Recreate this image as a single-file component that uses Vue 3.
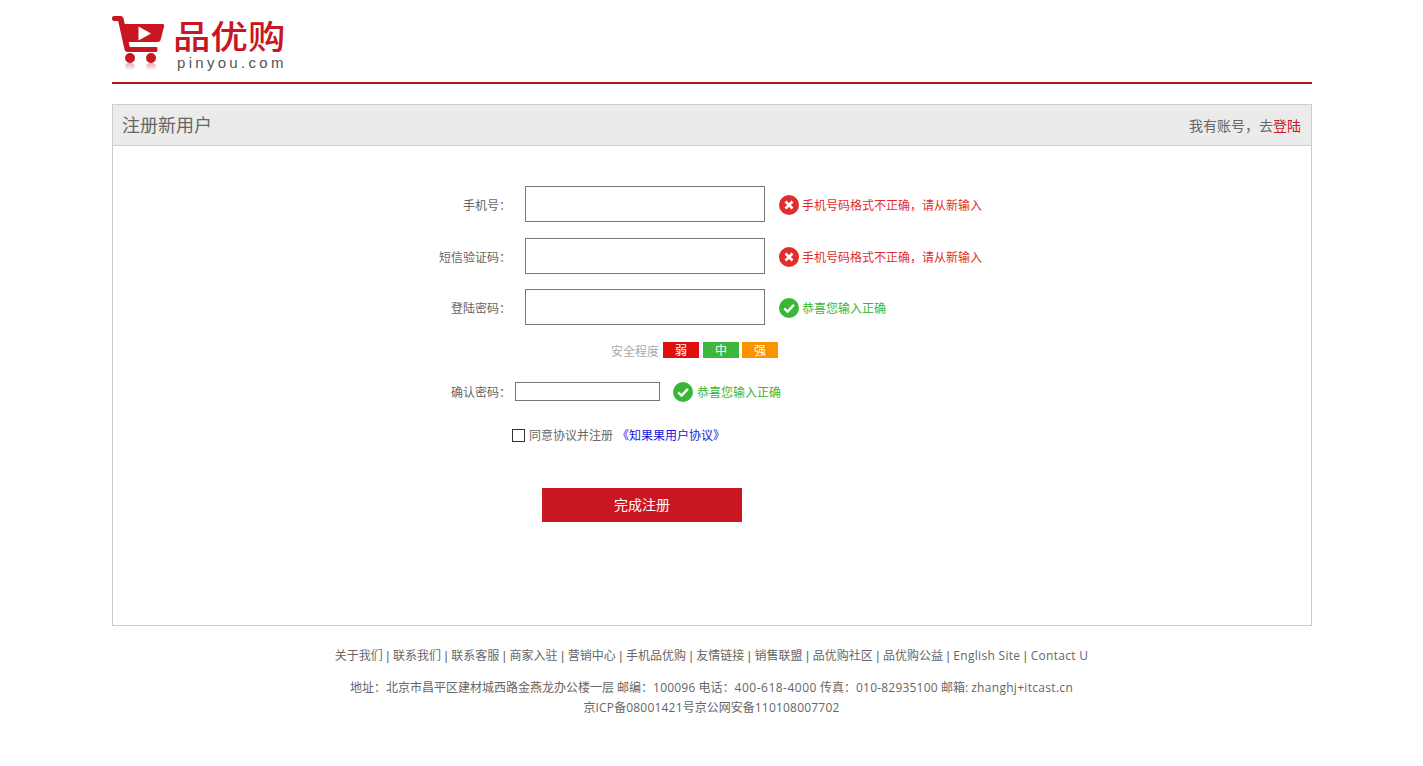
<script setup>
const footerLinks = ['关于我们','联系我们','联系客服','商家入驻','营销中心','手机品优购','友情链接','销售联盟','品优购社区','品优购公益']
const footerLatin = ['English Site','Contact U']
const wideRows = [
  { label: '手机号：', ok: false, msg: '手机号码格式不正确，请从新输入', cls: 'gap-a' },
  { label: '短信验证码：', ok: false, msg: '手机号码格式不正确，请从新输入', cls: 'gap-b' },
  { label: '登陆密码：', ok: true, msg: '恭喜您输入正确', cls: 'gap-c' }
]
</script>

<template>
  <div class="page">
    <header class="top">
      <svg class="cart" viewBox="112 14 54 58" width="54" height="58" aria-hidden="true">
        <defs>
          <linearGradient id="fade" x1="0" y1="0" x2="0" y2="1">
            <stop offset="0" stop-color="#c81623" stop-opacity=".4" />
            <stop offset="1" stop-color="#c81623" stop-opacity="0" />
          </linearGradient>
        </defs>
        <path d="M114 16h6.5c1.6 0 2.6.9 3 2.400l6.300 28.600h26.200c1 0 1.500.6 1.500 2.500s-.5 2.500-1.500 2.500h-28.500c-1.600 0-2.700-.9-3-2.400l-6.300-28.600h-4.200c-1.300 0-2-1-2-2.500s.7-2.500 2-2.500z" fill="#c81623" />
        <path d="M123.500 24h39c1.300 0 2 .9 1.700 2.100l-3.500 13.400c-.4 1.500-1.200 2.500-2.700 2.500h-29.800l-2.700 1z" fill="#c81623" />
        <path d="M138.500 26.500l12.500 7-12.500 7z" fill="#fff" />
        <circle cx="130" cy="58" r="5" fill="#c81623" />
        <circle cx="151" cy="58" r="5" fill="#c81623" />
        <ellipse cx="130" cy="66.500" rx="5" ry="4" fill="url(#fade)" />
        <ellipse cx="151" cy="66.500" rx="5" ry="4" fill="url(#fade)" />
      </svg>
      <div class="brand">
        <div class="brand-cn">品优购</div>
        <div class="brand-en">pinyou.com</div>
      </div>
    </header>

    <section class="panel">
      <div class="panel-head">
        <h3 class="panel-title">注册新用户</h3>
        <span class="panel-login">我有账号，去<a class="login-link">登陆</a></span>
      </div>

      <div class="panel-body">
        <div v-for="row in wideRows" :key="row.label" class="row" :class="row.cls">
          <label class="label">{{ row.label }}</label>
          <div class="input wide"></div>
          <div class="msg" :class="row.ok ? 'ok' : 'err'">
            <svg class="msg-icon" viewBox="0 0 20 20" width="20" height="20" aria-hidden="true">
              <circle cx="10" cy="10" r="10" :fill="row.ok ? '#39b636' : '#e22d2d'" />
              <path v-if="row.ok" d="M5.200 10.300l3.400 3.300 6.300-6.700" fill="none" stroke="#fff" stroke-width="2.400" />
              <path v-else d="M6.500 6.500l7 7M13.500 6.500l-7 7" fill="none" stroke="#fff" stroke-width="2.600" />
            </svg>
            <span>{{ row.msg }}</span>
          </div>
        </div>

        <div class="strength">
          <span class="strength-label">安全程度</span>
          <span class="level red">弱</span>
          <span class="level green">中</span>
          <span class="level orange">强</span>
        </div>

        <div class="row confirm">
          <label class="label">确认密码：</label>
          <div class="input narrow"></div>
          <div class="msg ok tight">
            <svg class="msg-icon" viewBox="0 0 20 20" width="20" height="20" aria-hidden="true">
              <circle cx="10" cy="10" r="10" fill="#39b636" />
              <path d="M5.200 10.300l3.400 3.300 6.300-6.700" fill="none" stroke="#fff" stroke-width="2.400" />
            </svg>
            <span>恭喜您输入正确</span>
          </div>
        </div>

        <div class="agree">
          <span class="check"></span>
          <span class="agree-text">同意协议并注册</span>
          <a class="agree-link">《知果果用户协议》</a>
        </div>

        <button class="submit" type="button">完成注册</button>
      </div>
    </section>

    <footer class="foot">
      <p class="foot-links">
        <template v-for="item in footerLinks" :key="item"><span>{{ item }}</span><span class="sep"> | </span></template><span class="lat">{{ footerLatin[0] }}</span><span class="sep"> | </span><span class="lat">{{ footerLatin[1] }}</span>
      </p>
      <p class="foot-line first">地址：北京市昌平区建材城西路金燕龙办公楼一层 邮编：<span class="lat-s">100096</span> 电话：<span class="lat-m">400-618-4000</span> 传真：<span class="lat-s">010-82935100</span> 邮箱: <span class="lat">zhanghj+itcast.cn</span></p>
      <p class="foot-line last">京<span class="lat-s">ICP</span>备<span class="lat-s">08001421</span>号京公网安备<span class="lat-s">110108007702</span></p>
    </footer>
  </div>
</template>

<style>
html, body { margin: 0; background: #fff; }
</style>

<style scoped>
.page {
  width: 1200px;
  margin-left: 112px;
  font-family: "Open Sans", "Noto Sans CJK SC", sans-serif;
  font-size: 12px;
  color: #666;
}
.top {
  height: 82px;
  border-bottom: 2px solid #b1191a;
  display: flex;
  align-items: flex-start;
}
.cart { margin-top: 14px; flex: none; }
.brand { margin-left: 7px; width: 120px; }
.brand-cn {
  margin-top: 13px;
  height: 40px;
  font-family: "Noto Sans CJK SC", sans-serif;
  font-size: 36px;
  font-weight: 500;
  line-height: 40px;
  color: #c81623;
  white-space: nowrap;
  transform: scale(1.04, .92);
  transform-origin: left bottom;
}
.brand-en {
  margin-left: 4px;
  margin-top: 1px;
  font-family: "Liberation Sans", sans-serif;
  font-size: 15px;
  line-height: 17px;
  letter-spacing: 3.300px;
  color: #555;
}
.panel {
  margin-top: 20px;
  height: 522px;
  box-sizing: border-box;
  border: 1px solid #ccc;
}
.panel-head {
  height: 41px;
  box-sizing: border-box;
  background: #ebebeb;
  border-bottom: 1px solid #ccc;
  padding: 0 10px 0 9px;
  display: flex;
  align-items: center;
  justify-content: space-between;
}
.panel-title {
  margin: 0 0 2px;
  font-family: "Noto Sans CJK SC", sans-serif;
  font-size: 18px;
  font-weight: 400;
  color: #666;
}
.panel-login {
  margin-bottom: 1px;
  font-family: "Noto Sans CJK SC", sans-serif;
  font-size: 14px;
  color: #666;
}
.login-link { color: #c81623; }
.panel-body {
  padding-top: 40px;
  font-family: "Noto Sans CJK SC", sans-serif;
}
.row {
  display: flex;
  align-items: center;
  padding-left: 278px;
}
.gap-a { margin-bottom: 16px; }
.gap-b { margin-bottom: 15px; }
.gap-c { margin-bottom: 17px; }
.label {
  width: 120px;
  text-align: right;
  flex: none;
}
.input {
  box-sizing: border-box;
  border: 1px solid #767676;
  background: #fff;
  flex: none;
}
.wide { width: 240px; height: 36px; margin-left: 14px; }
.narrow { width: 145px; height: 19px; margin-left: 4px; }
.msg {
  display: flex;
  align-items: center;
  gap: 3px;
  margin-left: 14px;
}
.msg-icon { flex: none; margin-top: 2px; }
.tight { margin-left: 13px; gap: 4px; }
.tight .msg-icon { margin-top: 1px; margin-bottom: -1px; }
.err { color: #e22d2d; }
.ok { color: #39b636; }
.strength {
  height: 16px;
  display: flex;
  align-items: center;
  padding-left: 498px;
}
.strength-label {
  color: #aaa;
  width: 52px;
  flex: none;
}
.level {
  width: 36px;
  height: 16px;
  line-height: 16px;
  text-align: center;
  color: #fff;
  flex: none;
}
.red { background: #e00f0f; margin-right: 4px; }
.green { background: #3db83d; margin-right: 3px; }
.orange { background: #fb9300; }
.confirm {
  margin-top: 23px;
}
.agree {
  margin-top: 28px;
  height: 13px;
  padding-left: 399px;
  display: flex;
  align-items: center;
}
.check {
  width: 13px;
  height: 13px;
  box-sizing: border-box;
  border: 1px solid #333;
  background: #fff;
  flex: none;
}
.agree-text { margin-left: 4px; margin-bottom: 2px; }
.agree-link { margin-left: 4px; margin-bottom: 2px; color: #1515e0; }
.submit {
  display: block;
  margin: 46px 0 0 429px;
  width: 200px;
  height: 34px;
  border: 0;
  padding: 0 0 2px;
  background: #c81623;
  color: #fff;
  font-family: "Noto Sans CJK SC", sans-serif;
  font-size: 14px;
}
.foot {
  text-align: center;
  padding-top: 20px;
  margin-right: 1px;
}
.foot p { margin: 0; line-height: 20px; white-space: nowrap; }
.foot-line.first { margin-top: 12px; }
.sep {
  font-family: "Liberation Sans", sans-serif;
  letter-spacing: .15px;
  white-space: pre;
}
.lat { letter-spacing: .3px; }
.lat-m { letter-spacing: .5px; }
.lat-s { letter-spacing: .2px; }
</style>
